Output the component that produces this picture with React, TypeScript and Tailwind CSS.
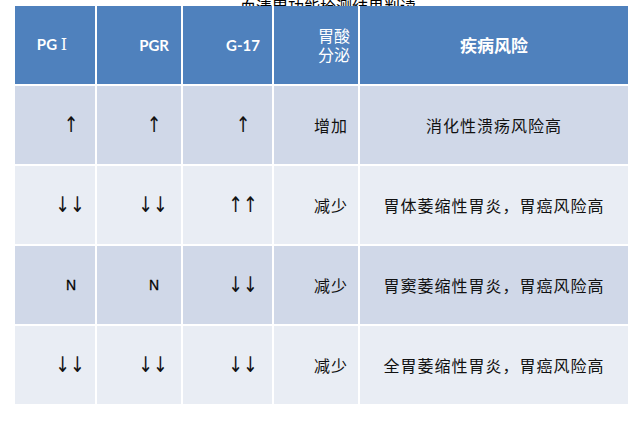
import React from "react";

const cjk = "font-['Noto_Sans_CJK_SC','Noto_Sans',sans-serif]";
const arrow =
  "inline-block font-['DejaVu_Sans',sans-serif] font-normal text-[16px] leading-[16px] text-[#111] origin-right scale-x-[1.1] scale-y-[1.35]";
const latinH = "font-['Lato','Liberation_Sans',sans-serif] font-bold text-[15px] text-white";

type Cell = { text: string; kind: "arrow" | "n" | "cjk"; pr: number };

const rows: { bg: string; cells: Cell[]; risk: string }[] = [
  {
    bg: "bg-[#D0D8E8]",
    cells: [
      { text: "↑", kind: "arrow", pr: 17 },
      { text: "↑", kind: "arrow", pr: 20 },
      { text: "↑", kind: "arrow", pr: 22 },
      { text: "增加", kind: "cjk", pr: 10 },
    ],
    risk: "消化性溃疡风险高",
  },
  {
    bg: "bg-[#E9EDF4]",
    cells: [
      { text: "↓↓", kind: "arrow", pr: 10 },
      { text: "↓↓", kind: "arrow", pr: 13 },
      { text: "↑↑", kind: "arrow", pr: 14 },
      { text: "减少", kind: "cjk", pr: 10 },
    ],
    risk: "胃体萎缩性胃炎，胃癌风险高",
  },
  {
    bg: "bg-[#D0D8E8]",
    cells: [
      { text: "N", kind: "n", pr: 19 },
      { text: "N", kind: "n", pr: 22 },
      { text: "↓↓", kind: "arrow", pr: 14 },
      { text: "减少", kind: "cjk", pr: 10 },
    ],
    risk: "胃窦萎缩性胃炎，胃癌风险高",
  },
  {
    bg: "bg-[#E9EDF4]",
    cells: [
      { text: "↓↓", kind: "arrow", pr: 10 },
      { text: "↓↓", kind: "arrow", pr: 13 },
      { text: "↓↓", kind: "arrow", pr: 14 },
      { text: "减少", kind: "cjk", pr: 10 },
    ],
    risk: "全胃萎缩性胃炎，胃癌风险高",
  },
];

function kindClass(k: Cell["kind"]) {
  if (k === "arrow") return arrow;
  if (k === "n") return "font-['Liberation_Sans',sans-serif] font-normal text-[14px] text-black [-webkit-text-stroke:0.3px_black]";
  return `${cjk} text-[16px] tracking-[1px] text-[#111]`;
}

export default function App() {
  return (
    <div className="w-[642px] h-[421px] bg-white overflow-hidden">
      <div className="h-[6px] overflow-hidden flex items-end justify-center pl-[14px]">
        <div className={`${cjk} text-[16px] leading-[16px] text-black -mb-[8px]`}>
          血清胃功能检测结果判读
        </div>
      </div>
      <div className="ml-[15px] w-[613px] grid grid-cols-[80px_84px_89px_84px_268px] gap-[2px] bg-white">
        <div className="h-[78px] bg-[#4F81BD] flex items-center justify-end pr-[28px]">
          <span className={latinH}>
            PG <span className="font-['DejaVu_Serif',serif] font-normal text-[16px]">Ⅰ</span>
          </span>
        </div>
        <div className="h-[78px] bg-[#4F81BD] flex items-center justify-end pr-[12px]">
          <span className={latinH}>PGR</span>
        </div>
        <div className="h-[78px] bg-[#4F81BD] flex items-center justify-end pr-[12px]">
          <span className={latinH}>G-17</span>
        </div>
        <div className="h-[78px] bg-[#4F81BD] flex flex-col items-end justify-center pr-[8px]">
          <div className={`${cjk} text-[16px] leading-[19px] text-white`}>胃酸</div>
          <div className={`${cjk} text-[16px] leading-[19px] text-white`}>分泌</div>
        </div>
        <div className="h-[78px] bg-[#4F81BD] flex items-center justify-center">
          <span className={`${cjk} text-[17px] font-bold text-white`}>疾病风险</span>
        </div>
        {rows.map((r, i) => (
          <React.Fragment key={i}>
            {r.cells.map((c, j) => (
              <div
                key={j}
                className={`h-[78px] ${r.bg} flex items-center justify-end`}
                style={{ paddingRight: c.pr }}
              >
                <span className={kindClass(c.kind)}>{c.text}</span>
              </div>
            ))}
            <div className={`h-[78px] ${r.bg} flex items-center justify-center`}>
              <span className={`${cjk} text-[16px] tracking-[1px] text-[#111]`}>{r.risk}</span>
            </div>
          </React.Fragment>
        ))}
      </div>
    </div>
  );
}
